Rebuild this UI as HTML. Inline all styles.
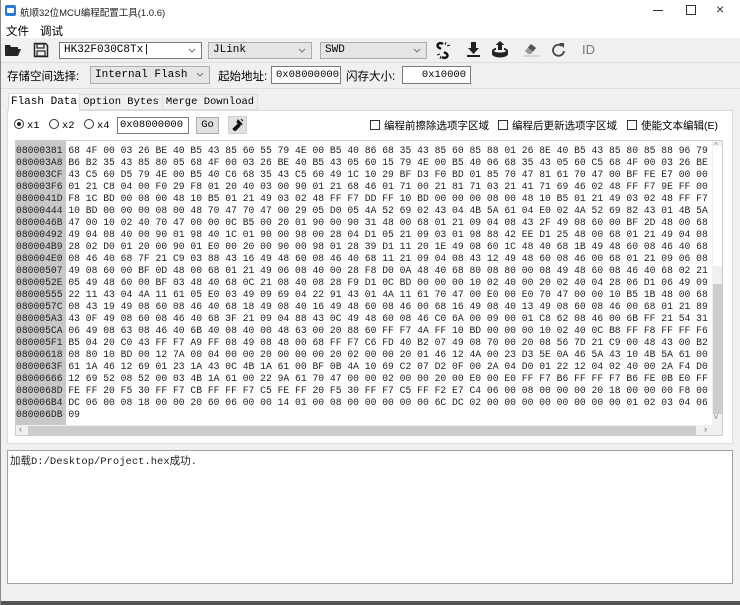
<!DOCTYPE html>
<html><head><meta charset="utf-8"><style>
*{box-sizing:border-box;margin:0;padding:0}
body{width:740px;height:605px;overflow:hidden;background:#f0f0f0;font-family:"Liberation Sans","Noto Sans CJK SC",sans-serif;font-size:11px;color:#000;position:relative}
.a{position:absolute}
.mono{font-family:"Liberation Mono","Noto Sans CJK SC",monospace}
.serif{font-family:"Liberation Serif","Noto Serif CJK SC",serif}
.combo{position:absolute;background:#e5e5e5;border:1px solid #adadad;height:17px;font-family:"Liberation Mono",monospace;font-size:11px;line-height:15px;padding-left:4px}
.combo .ar{position:absolute;right:5px;top:5px;width:8px;height:5px}
.inp{position:absolute;background:#fff;border:1px solid #7a7a7a;height:18px;font-family:"Liberation Mono",monospace;font-size:10.5px;line-height:16px;padding:0 4px}
.lbl{position:absolute;font-size:11.5px;font-family:"Liberation Sans","Noto Sans CJK SC",sans-serif}
.cb{display:inline-block;width:10px;height:10px;border:1px solid #333;background:#fff;vertical-align:-1px;margin-right:4px}
.rd{display:inline-block;width:10px;height:10px;border:1px solid #333;border-radius:50%;background:#fff;vertical-align:-1px;margin-right:3px;position:relative}
#hex{position:absolute;left:15px;top:140px;width:708px;height:296px;background:#fff;border:1px solid #ccc;overflow:hidden}
#hex pre{position:absolute;left:0;top:4px;font-family:"Liberation Mono",monospace;font-size:9.7px;line-height:12px;color:#222;white-space:pre}
#addr{position:absolute;left:0;top:0;width:50px;height:284px;background:#c8c8c8}
</style></head><body>
<!-- title bar -->
<div class="a" style="left:0;top:0;width:740px;height:22px;background:#fff"></div>
<div class="a" style="left:5px;top:5px;width:11px;height:11px;background:#2a7ad5;border-radius:2px"></div>
<div class="a" style="left:7px;top:8px;width:7px;height:5px;background:#fff;border-radius:1px"></div>
<div class="a" style="left:20px;top:5px;font-size:9.5px;color:#222">航顺32位MCU编程配置工具(1.0.6)</div>
<div class="a" style="left:653px;top:10px;width:10px;height:1px;background:#333"></div>
<div class="a" style="left:686px;top:5px;width:10px;height:10px;border:1px solid #333"></div>
<div class="a" style="left:716px;top:1px;font-size:14px;color:#333">×</div>
<!-- menu -->
<div class="a" style="left:0;top:22px;width:740px;height:16px;background:#fff"></div>
<div class="a" style="left:6px;top:23px;font-size:11.5px">文件</div>
<div class="a" style="left:40px;top:23px;font-size:11.5px">调试</div>
<!-- toolbar -->
<svg class="a" style="left:4px;top:43px" width="18" height="14" viewBox="0 0 18 14"><path d="M1 2h5l1 2h7v2H4L1 13z" fill="#222"/><path d="M4 6h13l-3 7H1z" fill="#222"/></svg>
<svg class="a" style="left:33px;top:42px" width="16" height="16" viewBox="0 0 16 16"><path d="M1.5 1.5h11l2 2v11h-13z" fill="none" stroke="#222" stroke-width="1.5"/><rect x="4" y="2" width="7" height="4" fill="none" stroke="#222" stroke-width="1.2"/><rect x="4" y="9" width="8" height="5" fill="none" stroke="#222" stroke-width="1.2"/></svg>
<div class="combo" style="left:59px;top:42px;width:143px;background:#fff;border-color:#7a7a7a">HK32F030C8Tx|<svg class="ar" viewBox="0 0 8 5"><path d="M1 1l3 3 3-3" fill="none" stroke="#777"/></svg></div>
<div class="combo" style="left:208px;top:42px;width:104px">JLink<svg class="ar" viewBox="0 0 8 5"><path d="M1 1l3 3 3-3" fill="none" stroke="#777"/></svg></div>
<div class="combo" style="left:320px;top:42px;width:107px">SWD<svg class="ar" viewBox="0 0 8 5"><path d="M1 1l3 3 3-3" fill="none" stroke="#777"/></svg></div>
<svg class="a" style="left:434px;top:41px" width="19" height="19" viewBox="0 0 19 19"><path d="M9 3c-3-2-7 0-5 3l3 2M10 11l3 2c2 3-2 5-5 3" fill="none" stroke="#111" stroke-width="2.4"/><path d="M12 1l-1 3M16 4l-3 1M3 14l3-1M6 18l1-3" stroke="#111" stroke-width="1"/></svg>
<svg class="a" style="left:467px;top:42px" width="13" height="16" viewBox="0 0 13 16"><path d="M4 0h5v6h3l-5.5 6L1 6h3z" fill="#222"/><rect x="0" y="13" width="13" height="2" fill="#222"/></svg>
<svg class="a" style="left:491px;top:41px" width="18" height="17" viewBox="0 0 18 17"><path d="M7 9V4H4.5L9 0l4.5 4H11v5z" fill="#222"/><path d="M1 10c0-2 3-3 4-3v2c-1 0-2 .5-2 1s2 1.5 6 1.5 6-1 6-1.5-1-1-2-1V7c1 0 4 1 4 3v3c0 2-4 3.5-8 3.5S1 15 1 13z" fill="#222"/></svg>
<svg class="a" style="left:523px;top:43px" width="16" height="14" viewBox="0 0 16 14"><path d="M8 1l5 4-5 6H5L2 8z" fill="#999"/><path d="M8 1l5 4-3 3.5L5 4.5z" fill="#555"/><path d="M0 13h16" stroke="#bbb"/></svg>
<svg class="a" style="left:551px;top:42px" width="15" height="16" viewBox="0 0 15 16"><path d="M11 4A5.5 5.5 0 1 0 13 9" fill="none" stroke="#444" stroke-width="1.8"/><path d="M8 1h5v5z" fill="#444"/></svg>
<div class="a" style="left:582px;top:42px;font-size:13px;color:#777">ID</div>
<div class="a" style="left:0;top:62px;width:740px;height:1px;background:#ddd"></div>
<!-- storage row -->
<div class="lbl" style="left:7px;top:68px">存储空间选择:</div>
<div class="combo" style="left:90px;top:66px;width:120px;height:18px;line-height:16px">Internal Flash<svg class="ar" viewBox="0 0 8 5"><path d="M1 1l3 3 3-3" fill="none" stroke="#777"/></svg></div>
<div class="lbl" style="left:218px;top:68px">起始地址:</div>
<div class="inp" style="left:271px;top:66px;width:70px;text-align:right">0x08000000</div>
<div class="lbl" style="left:346px;top:68px">闪存大小:</div>
<div class="inp" style="left:402px;top:66px;width:69px;text-align:right">0x10000</div>
<div class="a" style="left:0;top:88px;width:740px;height:1px;background:#ddd"></div>
<!-- tabs -->
<div class="a" style="left:7px;top:110px;width:726px;height:334px;background:#fff;border:1px solid #dcdcdc"></div>
<div class="a serif" style="left:8px;top:93px;width:72px;height:18px;background:#fff;border:1px solid #dcdcdc;border-bottom:none;font-size:11px;line-height:17px;text-align:center;font-family:'Liberation Mono',monospace">Flash Data</div>
<div class="a" style="left:80px;top:94px;width:83px;height:16px;border:1px solid #dcdcdc;border-left:none;font-family:'Liberation Mono',monospace;font-size:10.5px;line-height:15px;text-align:center">Option Bytes</div>
<div class="a" style="left:163px;top:94px;width:95px;height:16px;border:1px solid #dcdcdc;border-left:none;font-family:'Liberation Mono',monospace;font-size:10.5px;line-height:15px;text-align:center">Merge Download</div>
<!-- options row -->
<div class="a mono" style="left:14px;top:119px;font-size:10.5px"><span class="rd"><span style="position:absolute;left:2px;top:2px;width:4px;height:4px;border-radius:50%;background:#222"></span></span>x1</div>
<div class="a mono" style="left:49px;top:119px;font-size:10.5px"><span class="rd"></span>x2</div>
<div class="a mono" style="left:84px;top:119px;font-size:10.5px"><span class="rd"></span>x4</div>
<div class="inp" style="left:117px;top:117px;width:72px;height:17px;line-height:15px;padding-left:2px">0x08000000</div>
<div class="a mono" style="left:196px;top:117px;width:23px;height:17px;background:#e1e1e1;border:1px solid #adadad;font-size:10.5px;line-height:15px;text-align:center">Go</div>
<div class="a" style="left:228px;top:116px;width:19px;height:18px;background:#e1e1e1;border:1px solid #d0d0d0"></div>
<svg class="a" style="left:231px;top:118px" width="13" height="13" viewBox="0 0 13 13"><path d="M2 11l5-5 2 2-5 5zM7 2l4 4-2 1-3-3zM10 1l2 2" stroke="#111" fill="#111" stroke-width="1"/></svg>
<div class="lbl" style="left:370px;top:118px;font-size:10.5px"><span class="cb"></span>编程前擦除选项字区域</div>
<div class="lbl" style="left:498px;top:118px;font-size:10.5px"><span class="cb"></span>编程后更新选项字区域</div>
<div class="lbl" style="left:627px;top:118px;font-size:10.5px"><span class="cb"></span>使能文本编辑(E)</div>
<!-- hex -->
<div id="hex"><div id="addr"></div>
<pre>08000381 68 4F 00 03 26 BE 40 B5 43 85 60 55 79 4E 00 B5 40 86 68 35 43 85 60 85 88 01 26 8E 40 B5 43 85 80 85 88 96 79 8E 00
080003A8 B6 B2 35 43 85 80 05 68 4F 00 03 26 BE 40 B5 43 05 60 15 79 4E 00 B5 40 06 68 35 43 05 60 C5 68 4F 00 03 26 BE 40 B5
080003CF 43 C5 60 D5 79 4E 00 B5 40 C6 68 35 43 C5 60 49 1C 10 29 BF D3 F0 BD 01 85 70 47 81 61 70 47 00 BF FE E7 00 00 1C B5
080003F6 01 21 C8 04 00 F0 29 F8 01 20 40 03 00 90 01 21 68 46 01 71 00 21 81 71 03 21 41 71 69 46 02 48 FF F7 9E FF 00 F0 01
0800041D F8 1C BD 00 08 00 48 10 B5 01 21 49 03 02 48 FF F7 DD FF 10 BD 00 00 00 08 00 48 10 B5 01 21 49 03 02 48 FF F7 D1 FF
08000444 10 BD 00 00 00 08 00 48 70 47 70 47 00 29 05 D0 05 4A 52 69 02 43 04 4B 5A 61 04 E0 02 4A 52 69 82 43 01 4B 5A 61 70
0800046B 47 00 10 02 40 70 47 00 00 0C B5 00 20 01 90 00 90 31 48 00 68 01 21 09 04 08 43 2F 49 08 60 00 BF 2D 48 00 68 01 21
08000492 49 04 08 40 00 90 01 98 40 1C 01 90 00 98 00 28 04 D1 05 21 09 03 01 98 88 42 EE D1 25 48 00 68 01 21 49 04 08 40 00
080004B9 28 02 D0 01 20 00 90 01 E0 00 20 00 90 00 98 01 28 39 D1 11 20 1E 49 08 60 1C 48 40 68 1B 49 48 60 08 46 40 68 48 60
080004E0 08 46 40 68 7F 21 C9 03 88 43 16 49 48 60 08 46 40 68 11 21 09 04 08 43 12 49 48 60 08 46 00 68 01 21 09 06 08 43 08
08000507 49 08 60 00 BF 0D 48 00 68 01 21 49 06 08 40 00 28 F8 D0 0A 48 40 68 80 08 80 00 08 49 48 60 08 46 40 68 02 21 08 43
0800052E 05 49 48 60 00 BF 03 48 40 68 0C 21 08 40 08 28 F9 D1 0C BD 00 00 00 10 02 40 00 20 02 40 04 28 06 D1 06 49 09 69 02
08000555 22 11 43 04 4A 11 61 05 E0 03 49 09 69 04 22 91 43 01 4A 11 61 70 47 00 E0 00 E0 70 47 00 00 10 B5 1B 48 00 68 01 21
0800057C 08 43 19 49 08 60 08 46 40 68 18 49 08 40 16 49 48 60 08 46 00 68 16 49 08 40 13 49 08 60 08 46 00 68 01 21 89 04 08
080005A3 43 0F 49 08 60 08 46 40 68 3F 21 09 04 88 43 0C 49 48 60 08 46 C0 6A 00 09 00 01 C8 62 08 46 00 6B FF 21 54 31 88 43
080005CA 06 49 08 63 08 46 40 6B 40 08 40 00 48 63 00 20 88 60 FF F7 4A FF 10 BD 00 00 00 10 02 40 0C B8 FF F8 FF FF F6 FE 10
080005F1 B5 04 20 C0 43 FF F7 A9 FF 08 49 08 48 00 68 FF F7 C6 FD 40 B2 07 49 08 70 00 20 08 56 7D 21 C9 00 48 43 00 B2 04 49
08000618 08 80 10 BD 00 12 7A 00 04 00 00 20 00 00 00 20 02 00 00 20 01 46 12 4A 00 23 D3 5E 0A 46 5A 43 10 4B 5A 61 00 22 9A
0800063F 61 1A 46 12 69 01 23 1A 43 0C 4B 1A 61 00 BF 0B 4A 10 69 C2 07 D2 0F 00 2A 04 D0 01 22 12 04 02 40 00 2A F4 D0 05 4A
08000666 12 69 52 08 52 00 03 4B 1A 61 00 22 9A 61 70 47 00 00 02 00 00 20 00 E0 00 E0 FF F7 B6 FF FF F7 B6 FE 0B E0 FF F7 BA
0800068D FE FF 20 F5 30 FF F7 CB FF FF F7 C5 FE FF 20 F5 30 FF F7 C5 FF F2 E7 C4 06 00 08 00 00 00 20 18 00 00 00 F8 00 00 08
080006B4 DC 06 00 08 18 00 00 20 60 06 00 00 14 01 00 08 00 00 00 00 00 6C DC 02 00 00 00 00 00 00 00 00 01 02 03 04 06 07 08
080006DB 09</pre>
<!-- vscroll -->
<div class="a" style="left:696px;top:0;width:11px;height:284px;background:#f0f0f0"></div>
<div class="a" style="left:697px;top:5px;width:9px;height:120px;background:#fff"></div>
<div class="a" style="left:697px;top:143px;width:9px;height:130px;background:#cdcdcd"></div>
<div class="a" style="left:698px;top:0;font-size:8px;color:#888">^</div>
<div class="a" style="left:698px;top:271px;font-size:8px;color:#888">v</div>
<!-- hscroll -->
<div class="a" style="left:0;top:284px;width:707px;height:11px;background:#f0f0f0"></div>
<div class="a" style="left:12px;top:285px;width:668px;height:9px;background:#cdcdcd"></div>
<div class="a" style="left:3px;top:283px;font-size:9px;color:#666">‹</div>
<div class="a" style="left:688px;top:283px;font-size:9px;color:#666">›</div>
</div>
<!-- log -->
<div class="a" style="left:7px;top:450px;width:726px;height:134px;background:#fff;border:1px solid #a0a0a0"></div>
<div class="a" style="left:10px;top:453px;font-family:'Liberation Mono','Noto Sans CJK SC',monospace;font-size:10.5px;color:#222">加载D:/Desktop/Project.hex成功.</div>
<div class="a" style="left:0;top:601px;width:740px;height:4px;background:#555"></div>
<div class="a" style="left:0;top:0;width:1px;height:605px;background:#888"></div>
</body></html>
